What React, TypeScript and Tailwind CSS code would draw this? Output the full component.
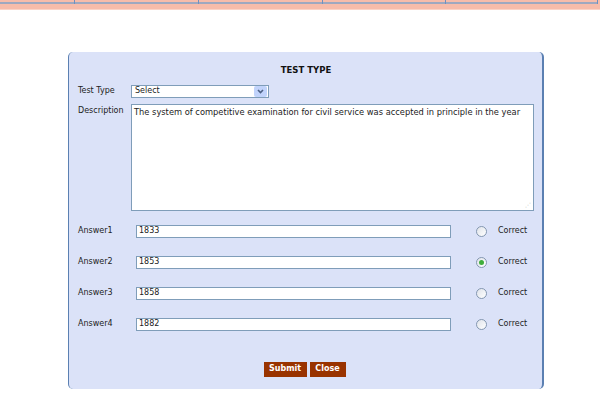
import React from "react";

const answers = [
  { label: "Answer1", value: "1833", checked: false },
  { label: "Answer2", value: "1853", checked: true },
  { label: "Answer3", value: "1858", checked: false },
  { label: "Answer4", value: "1882", checked: false },
];

function Radio({ checked }: { checked: boolean }) {
  return (
    <span className="flex h-[11px] w-[11px] items-center justify-center rounded-full border border-[#8497b0] bg-gradient-to-br from-[#dfe3ea] to-white">
      {checked && <span className="h-[5px] w-[5px] rounded-full bg-[#3fae3a]" />}
    </span>
  );
}

export default function App() {
  return (
    <div className="h-[400px] w-[600px] bg-white text-[8px] text-[#222] [font-family:'DejaVu_Sans',sans-serif]">
      {/* header strip */}
      <div className="relative h-[10px] bg-[#f7bcaa]">
        <div className="absolute left-0 right-[2px] top-[2px] h-[2px] bg-[#9ea8c0]" />
        {[74, 198, 322, 445, 597].map((x) => (
          <div key={x} className="absolute top-0 h-[4px] w-px bg-[#6f90c0]" style={{ left: x }} />
        ))}
        <div className="absolute bottom-0 left-0 right-0 h-px bg-[#fbd3c7]" />
      </div>

      <div className="ml-[68px] mt-[42px] h-[337px] w-[476px] rounded-[5px] border-l border-r-2 border-[#5b80b2] bg-[#dbe2f8] pl-[9px] pr-[8px]">
        <div className="pt-[12px] text-center text-[8.5px] font-bold text-[#111]">TEST TYPE</div>

        <div className="mt-[8px] flex items-center">
          <span className="w-[53px]">Test Type</span>
          <div className="flex h-[13px] w-[138px] items-center justify-between border border-[#7f9db9] bg-white pl-[3px]">
            <span>Select</span>
            <span className="mr-px flex h-[11px] w-[13px] items-center justify-center rounded-[2px] bg-[#c1d3fb]">
              <svg width="7" height="5" viewBox="0 0 7 5">
                <path d="M1 1 L3.5 3.5 L6 1" stroke="#4d6185" strokeWidth="1.6" fill="none" />
              </svg>
            </span>
          </div>
        </div>

        <div className="mt-[6px] flex">
          <span className="w-[53px] pt-[1px]">Description</span>
          <div className="relative h-[107px] w-[403px] border border-[#7f9db9] bg-white px-[2px] pt-[1px] text-[8.3px]">
            The system of competitive examination for civil service was accepted in principle in the year
            <span className="absolute bottom-[2px] right-[2px] text-[6px] leading-none text-[#b0b0b0]">⋰</span>
          </div>
        </div>

        <div className="mt-[14px] flex flex-col gap-[18px] leading-none">
          {answers.map((a) => (
            <div key={a.label} className="flex h-[13px] items-center">
              <span className="w-[58px]">{a.label}</span>
              <div className="flex h-[13px] w-[315px] items-center border border-[#7f9db9] bg-white pl-[2px]">{a.value}</div>
              <span className="ml-[25px]">
                <Radio checked={a.checked} />
              </span>
              <span className="ml-[11px]">Correct</span>
            </div>
          ))}
        </div>

        <div className="mt-[31px] flex justify-center gap-[3px] pr-[3px]">
          <button className="h-[15px] w-[43px] bg-[#993300] text-[8px] font-bold text-white">Submit</button>
          <button className="h-[15px] w-[36px] bg-[#993300] text-[8px] font-bold text-white">Close</button>
        </div>
      </div>
    </div>
  );
}
